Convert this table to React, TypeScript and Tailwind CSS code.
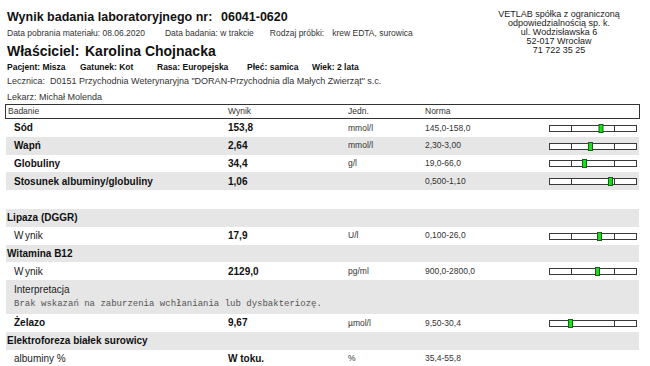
import React from 'react';

type Row =
  | { kind: 'test'; name: string; value: string; unit: string; norm: string; mark?: number; shade: boolean }
  | { kind: 'group'; name: string; shade: boolean }
  | { kind: 'sub'; name: string; value: string; unit: string; norm: string; mark?: number; shade: boolean };

const topRows: Row[] = [
  { kind: 'test', name: 'Sód', value: '153,8', unit: 'mmol/l', norm: '145,0-158,0', mark: 49.5, shade: false },
  { kind: 'test', name: 'Wapń', value: '2,64', unit: 'mmol/l', norm: '2,30-3,00', mark: 39, shade: true },
  { kind: 'test', name: 'Globuliny', value: '34,4', unit: 'g/l', norm: '19,0-66,0', mark: 33, shade: false },
  { kind: 'test', name: 'Stosunek albuminy/globuliny', value: '1,06', unit: '', norm: '0,500-1,10', mark: 59, shade: true },
];

// kreska z zakresem normy, zielony znacznik = wynik
function RangeBar({ mark }: { mark: number }) {
  return (
    <svg width="90" height="10" viewBox="0 0 90 10" className="block">
      <rect x="0.5" y="2.5" width="87" height="6" fill="#fff" stroke="#3a3a3a" />
      <line x1="22.5" y1="2.5" x2="22.5" y2="8.5" stroke="#3a3a3a" />
      <line x1="65.5" y1="2.5" x2="65.5" y2="8.5" stroke="#3a3a3a" />
      <rect x={mark + 0.5} y="1.5" width="4" height="8" fill="#17e017" stroke="#1d5e1d" />
    </svg>
  );
}

const cols = 'grid grid-cols-[222px_120px_77px_124px_90px_1fr] items-center';

function DataRow({ row, h = 'h-[17.75px]' }: { row: Row; h?: string }) {
  const bg = row.shade ? 'bg-[#e6e6e6]' : 'bg-white';
  if (row.kind === 'group') {
    return (
      <div className={`${cols} ${h} ${bg}`}>
        <div className="pl-[1px] text-[10px] font-bold text-[#111]">{row.name}</div>
      </div>
    );
  }
  return (
    <div className={`${cols} ${h} ${bg}`}>
      {row.kind === 'test' ? (
        <div className="pl-[8px] text-[10px] font-bold text-[#111]">{row.name}</div>
      ) : (
        <div className="pl-[8px] text-[10px] text-[#222]">
          {row.name === 'Wynik' ? (
            <>
              <span>W</span>
              <span className="ml-[1.5px]">ynik</span>
            </>
          ) : (
            row.name
          )}
        </div>
      )}
      <div className="text-[10px] font-bold text-[#111]">{row.value}</div>
      <div className="text-[8.5px] text-[#333]">{row.unit}</div>
      <div className="text-[8.5px] text-[#333]">{row.norm}</div>
      <div>{row.mark !== undefined && <RangeBar mark={row.mark} />}</div>
    </div>
  );
}

export default function App() {
  return (
    <div className="w-[650px] h-[366px] overflow-hidden bg-white font-['Liberation_Sans',Arial,sans-serif] text-[#222]">
      <div className="flex justify-between">
        <div className="pl-[7px] pt-[9px] whitespace-nowrap">
          <div className="h-[16px] leading-[16px] text-[12.5px] font-bold text-[#111] flex">
            <span className="w-[214px] shrink-0">Wynik badania laboratoryjnego nr:</span>
            <span>06041-0620</span>
          </div>
          <div className="mt-[3px] h-[11px] leading-[11px] text-[8.5px] text-[#333] flex">
            <span>Data pobrania materiału: 08.06.2020</span>
            <span className="ml-[20px]">Data badania: w trakcie</span>
            <span className="ml-[16px]">Rodzaj próbki:</span>
            <span className="ml-[8px]">krew EDTA, surowica</span>
          </div>
          <div className="mt-[4px] h-[17px] leading-[17px] text-[14px] font-bold text-[#111] flex">
            <span className="w-[78px] shrink-0">Właściciel:</span>
            <span>Karolina Chojnacka</span>
          </div>
          <div className="mt-[1px] h-[12px] leading-[12px] text-[8.5px] font-bold text-[#111] flex">
            <span className="w-[73px] shrink-0">Pacjent: Misza</span>
            <span className="w-[77px] shrink-0">Gatunek: Kot</span>
            <span className="w-[90px] shrink-0">Rasa: Europejska</span>
            <span className="w-[65px] shrink-0">Płeć: samica</span>
            <span>Wiek: 2 lata</span>
          </div>
          <div className="mt-[2px] h-[12px] leading-[12px] text-[9px] text-[#333] whitespace-pre">
            Lecznica:  D0151 Przychodnia Weterynaryjna "DORAN-Przychodnia dla Małych Zwierząt" s.c.
          </div>
          <div className="mt-[4px] h-[12px] leading-[12px] text-[9px] text-[#333]">Lekarz: Michał Molenda</div>
        </div>
        <div className="mr-[16px] pt-[10px] w-[150px] shrink-0 text-center text-[9px] leading-[9px] text-[#222]">
          <div>VETLAB spółka z ograniczoną</div>
          <div>odpowiedzialnością sp. k.</div>
          <div>ul. Wodzisławska 6</div>
          <div>52-017 Wrocław</div>
          <div>71 722 35 25</div>
        </div>
      </div>

      <div className="mt-[1px] ml-[5px] w-[635px]">
        <div className={`${cols} h-[15px] border border-[#333] text-[8.5px] text-[#333]`}>
          <div className="pl-[2px]">Badanie</div>
          <div>Wynik</div>
          <div>Jedn.</div>
          <div>Norma</div>
        </div>
        <div className="ml-[1px] w-[633px]">
          {topRows.map((r) => (
            <DataRow key={r.name} row={r} />
          ))}
          <div className="h-[19px]" />
          <DataRow row={{ kind: 'group', name: 'Lipaza (DGGR)', shade: true }} />
          <DataRow row={{ kind: 'sub', name: 'Wynik', value: '17,9', unit: 'U/l', norm: '0,100-26,0', mark: 48, shade: false }} />
          <DataRow row={{ kind: 'group', name: 'Witamina B12', shade: true }} />
          <DataRow row={{ kind: 'sub', name: 'Wynik', value: '2129,0', unit: 'pg/ml', norm: '900,0-2800,0', mark: 46, shade: false }} />
          <div className="h-[34px] bg-[#e6e6e6] pt-[3px] pl-[8px]">
            <div className="h-[13px] leading-[13px] text-[10px] text-[#222]">Interpretacja</div>
            <div className="h-[16px] leading-[16px] text-[9px] font-['Liberation_Mono',monospace] text-[#555]">
              Brak wskazań na zaburzenia wchłaniania lub dysbakteriozę.
            </div>
          </div>
          <DataRow row={{ kind: 'test', name: 'Żelazo', value: '9,67', unit: 'µmol/l', norm: '9,50-30,4', mark: 19, shade: false }} />
          <DataRow row={{ kind: 'group', name: 'Elektroforeza białek surowicy', shade: true }} />
          <DataRow row={{ kind: 'sub', name: 'albuminy %', value: 'W toku.', unit: '%', norm: '35,4-55,8', shade: false }} />
        </div>
      </div>
    </div>
  );
}
